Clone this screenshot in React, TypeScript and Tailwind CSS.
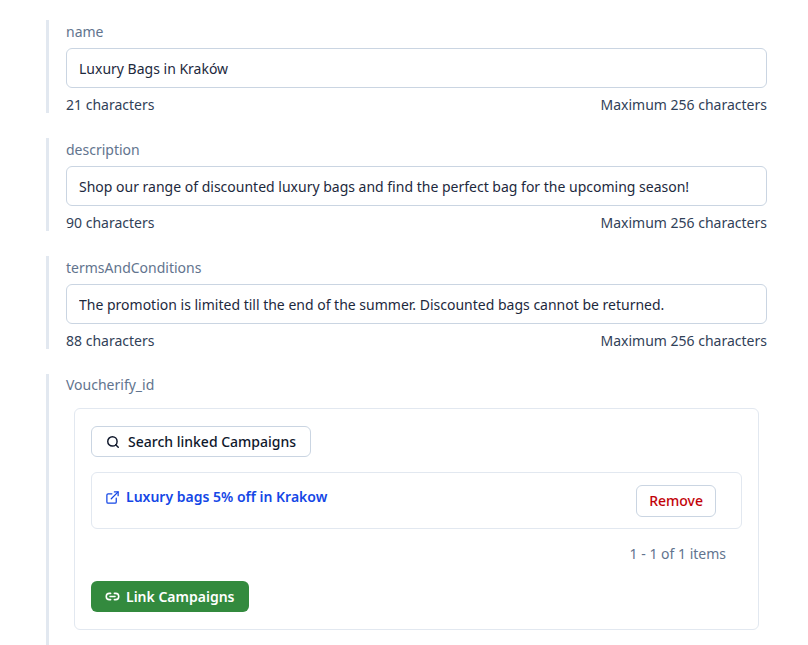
import { Search, ExternalLink, Link2 } from "lucide-react";

const fields = [
  { label: "name", value: "Luxury Bags in Kraków" },
  {
    label: "description",
    value: "Shop our range of discounted luxury bags and find the perfect bag for the upcoming season!",
  },
  {
    label: "termsAndConditions",
    value: "The promotion is limited till the end of the summer. Discounted bags cannot be returned.",
  },
];

export default function App() {
  return (
    <div className="min-h-[645px] bg-white pt-5 pl-[46px] pr-[41px] text-sm text-slate-700 font-['Inter',sans-serif]">
      <div className="flex flex-col gap-[25px]">
        {fields.map((f) => (
          <div key={f.label} className="border-l-[3px] border-slate-200 pl-[17px]">
            <div className="pt-[2px] leading-5 text-slate-500">{f.label}</div>
            <input
              readOnly
              value={f.value}
              className="mt-[6px] h-10 w-full rounded-md border border-slate-300 px-3 text-sm text-slate-800 outline-none"
            />
            <div className="mt-[9px] flex justify-between leading-4 text-slate-700">
              <span>{f.value.length} characters</span>
              <span>Maximum 256 characters</span>
            </div>
          </div>
        ))}
        <div className="border-l-[3px] border-slate-200 pl-[17px] pb-[17px]">
          <div className="pt-[1px] leading-5 text-slate-500">Voucherify_id</div>
          <div className="mx-2 mt-[13px] rounded-md border border-slate-200 px-4 pt-[17px] pb-[17px]">
            <button className="flex h-[31px] items-center gap-2 rounded-md border border-slate-300 px-[14px] text-sm font-medium text-slate-900">
              <Search size={14} strokeWidth={2.5} />
              Search linked Campaigns
            </button>
            <div className="mt-[15px] flex h-[57px] items-start justify-between rounded-md border border-slate-200 pl-[13px] pr-[25px]">
              <a className="mt-[14px] flex items-center gap-[6px] font-semibold text-blue-700">
                <ExternalLink size={15} strokeWidth={2} />
                Luxury bags 5% off in Krakow
              </a>
              <button className="mt-3 h-8 rounded-md border border-slate-300 px-3 text-sm font-medium text-red-700">
                Remove
              </button>
            </div>
            <div className="mt-[15px] pr-4 text-right leading-5 text-slate-500">1 - 1 of 1 items</div>
            <button className="mt-[17px] flex h-[31px] items-center gap-[6px] rounded-md bg-[#338a3e] px-[14px] text-sm font-semibold text-white">
              <Link2 size={15} strokeWidth={2.5} />
              Link Campaigns
            </button>
          </div>
        </div>
      </div>
    </div>
  );
}
